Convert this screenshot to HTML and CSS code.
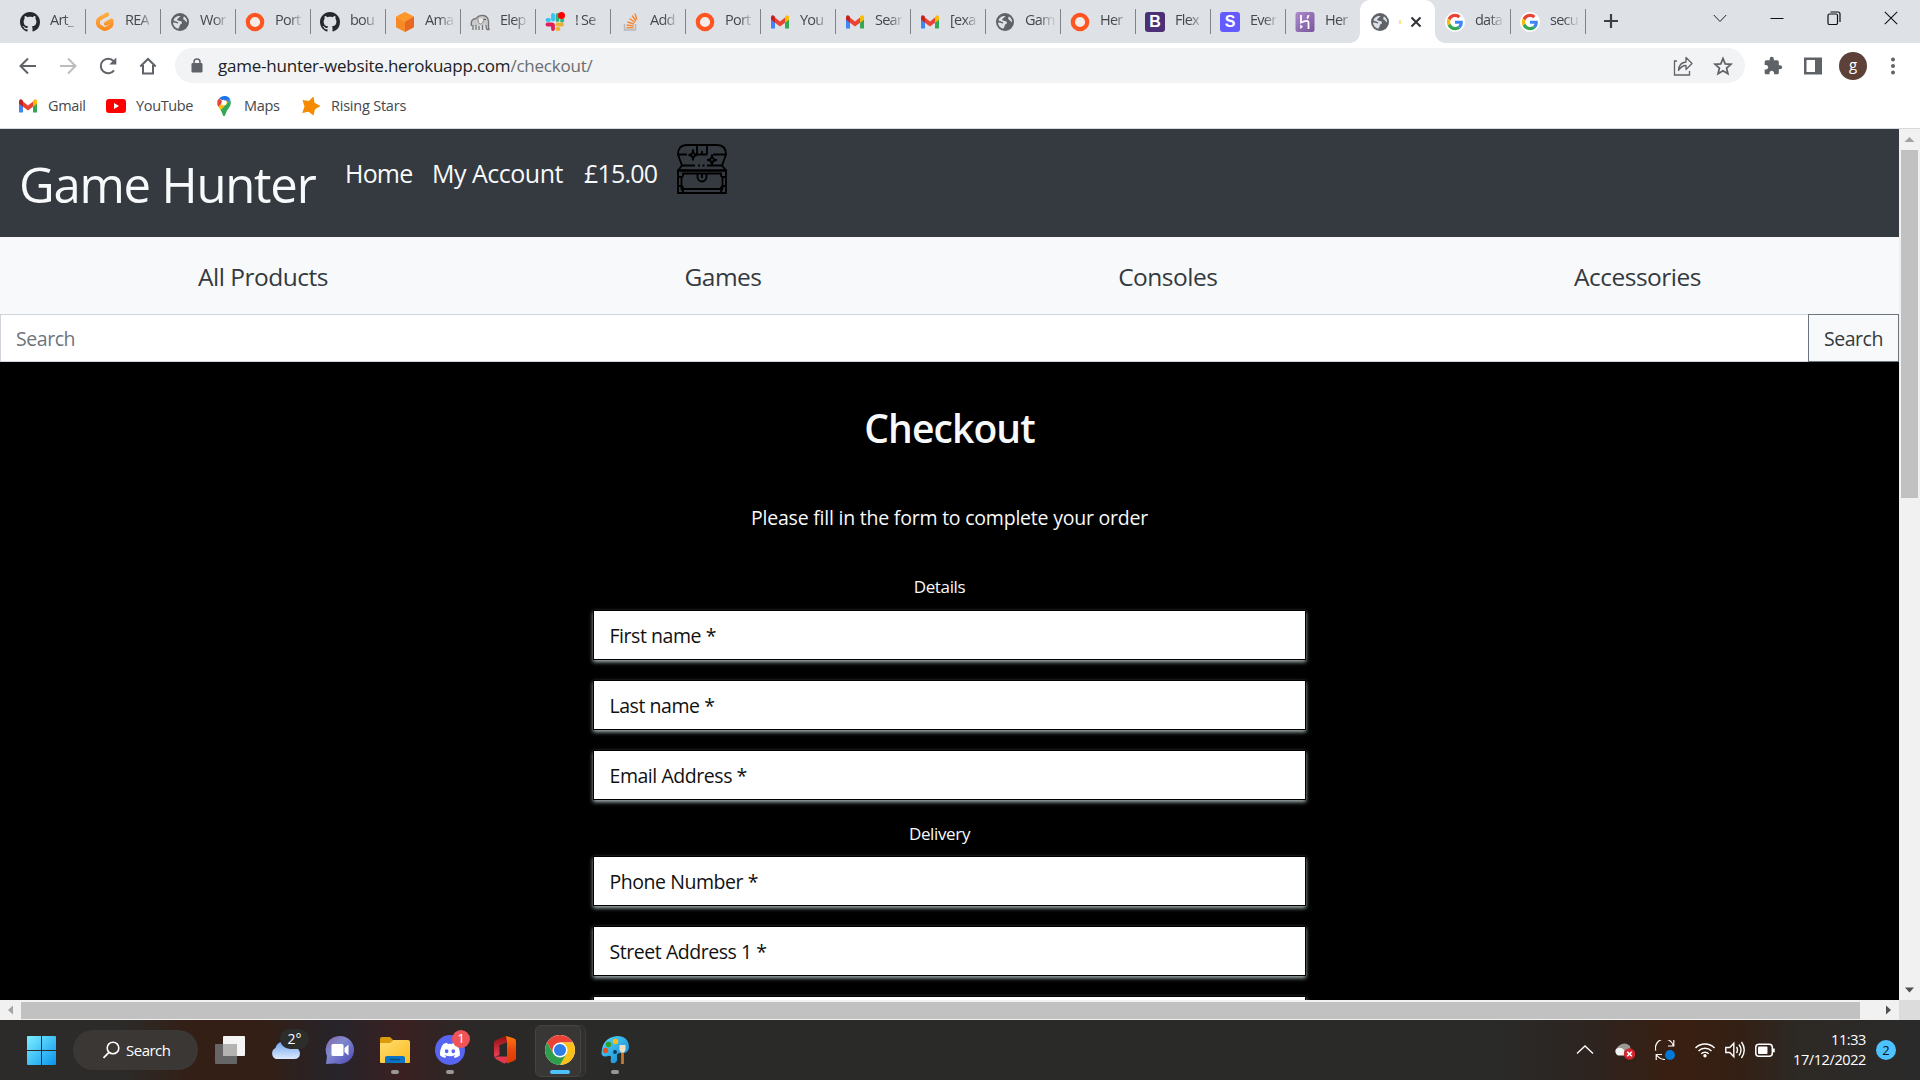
FILE: index.html
```html
<!DOCTYPE html>
<html lang="en">
<head>
<meta charset="utf-8">
<title>Game Hunter - Checkout</title>
<link rel="stylesheet" href="styles.css">
</head>
<body>
<svg class="sprite" width="0" height="0">
  <defs>
    <linearGradient id="gWin" x1="0" y1="0" x2="1" y2="1"><stop offset="0" stop-color="#7cf0ff"/><stop offset="1" stop-color="#0a93ee"/></linearGradient>
    <linearGradient id="gCloud" x1="0" y1="0" x2="0" y2="1"><stop offset="0" stop-color="#6ea3ee"/><stop offset="1" stop-color="#dbe9fd"/></linearGradient>
    <linearGradient id="gChat" x1="0" y1="0" x2="1" y2="1"><stop offset="0" stop-color="#8566a8"/><stop offset=".4" stop-color="#8189cf"/><stop offset="1" stop-color="#4b45b5"/></linearGradient>
    <linearGradient id="gFold" x1="0" y1="0" x2="1" y2="1"><stop offset="0" stop-color="#ffdc6e"/><stop offset="1" stop-color="#fbbd22"/></linearGradient>
    <linearGradient id="gOff" x1="0" y1="0" x2="0" y2="1"><stop offset="0" stop-color="#8d1010"/><stop offset="1" stop-color="#ee4058"/></linearGradient>
    <linearGradient id="gOffR" x1="0" y1="0" x2="0" y2="1"><stop offset="0" stop-color="#ff7a12"/><stop offset=".5" stop-color="#e8480d"/><stop offset="1" stop-color="#d83b01"/></linearGradient>
    <linearGradient id="gPal" x1="0" y1="0" x2="1" y2="1"><stop offset="0" stop-color="#58d6f5"/><stop offset="1" stop-color="#0c86d8"/></linearGradient>
    <linearGradient id="gHer" x1="0" y1="0" x2="1" y2="1"><stop offset="0" stop-color="#ad8bcb"/><stop offset="1" stop-color="#79559d"/></linearGradient>
    <linearGradient id="gG" x1="0" y1="0" x2="0" y2="1"><stop offset="0" stop-color="#ffae45"/><stop offset="1" stop-color="#fb8a1e"/></linearGradient>
  </defs>
  <symbol id="github" viewBox="0 0 16 16"><path fill="#24292f" d="M8 0C3.58 0 0 3.58 0 8c0 3.54 2.29 6.53 5.47 7.59.4.07.55-.17.55-.38 0-.19-.01-.82-.01-1.49-2.01.37-2.53-.49-2.69-.94-.09-.23-.48-.94-.82-1.13-.28-.15-.68-.52-.01-.53.63-.01 1.08.58 1.23.82.72 1.21 1.87.87 2.33.66.07-.52.28-.87.51-1.07-1.78-.2-3.64-.89-3.64-3.95 0-.87.31-1.59.82-2.15-.08-.2-.36-1.02.08-2.12 0 0 .67-.21 2.2.82.64-.18 1.32-.27 2-.27s1.36.09 2 .27c1.53-1.04 2.2-.82 2.2-.82.44 1.1.16 1.92.08 2.12.51.56.82 1.27.82 2.15 0 3.07-1.87 3.75-3.65 3.95.29.25.54.73.54 1.48 0 1.07-.01 1.93-.01 2.2 0 .21.15.46.55.38A8.01 8.01 0 0 0 16 8c0-4.42-3.58-8-8-8z"/></symbol>
  <symbol id="gitpod" viewBox="0 0 20 20"><path d="M12.200 2.400 4.900 6.500Q3 7.600 3 9.700v1.700q0 2.100 1.800 3.100l3.400 1.900q1.800 1 3.600 0l3-1.700q1.700-1 1.700-3V8.600l-5.600 3.100" fill="none" stroke="url(#gG)" stroke-width="4" stroke-linecap="round" stroke-linejoin="round"/></symbol>
  <symbol id="globe" viewBox="0 0 20 20"><circle cx="10" cy="10" r="9" fill="#5f6368"/><path d="M11 4c-2 .5-1.700 2.200-3 2.600-1.400.6-1 1.900.6 2.100 1.700.3 3.500.2 3.400 2 0 1.400-1.800 1.200-2.200 2.500-.2 1.200-.7 2.800-1.700 3.500C4.800 15.700 3 13 3 10.500c1.300.1 3.100.1 4.400 1 1 .3 1.200-1.100.2-1.500L3.500 8.400C4 5.500 7.200 3.400 11 4zM13.800 4.300c2.200 1.300 3.400 3.500 3.300 6-.8-.3-1.700-.9-2.100-1.800-.4-.8-1.500-.5-1.800-1.500-.2-1.100.7-1.500.6-2.700z" fill="#dee1e6"/></symbol>
  <symbol id="ring" viewBox="0 0 20 20"><circle cx="10" cy="10" r="7.200" fill="#f4ece9" stroke="#ff5621" stroke-width="4.200"/></symbol>
  <symbol id="cube" viewBox="0 0 20 20"><path d="M10 0l9 4.500L10 9.500 1 4.500z" fill="#fd9827"/><path d="M1 4.500l9 5V20l-9-4.800z" fill="#f78a26"/><path d="M19 4.500l-9 5V20l9-4.800z" fill="#e8681f"/></symbol>
  <symbol id="elephant" viewBox="0 0 20 20"><path d="M1.500 14Q0 7 6 6.500 9 3 13 3.500q5 .5 5.500 6V15q0 2 1 2.500h-2.500q-1-1-1-4.500M3 18v-5M6 18v-5M9 18v-4M12.500 18v-5" fill="#c9c9c9" stroke="#737373" stroke-width="1.300"/><path d="M8 6.500q0 5 2.500 5.500 3-.5 3-5.500" fill="#ececec" stroke="#8a8a8a"/><circle cx="15" cy="7.500" r=".8" fill="#333"/></symbol>
  <symbol id="slack" viewBox="0 0 20 20"><g stroke-width="3.800" stroke-linecap="round"><path d="M8 3v4.500" stroke="#36c5f0"/><path d="M2.500 8H4" stroke="#36c5f0"/><path d="M2.500 12.500H7" stroke="#e01e5a"/><path d="M8 13v4" stroke="#e01e5a"/><path d="M12.500 12.500H17" stroke="#ecb22e"/><path d="M12.500 17h1" stroke="#ecb22e"/><path d="M12.500 3v5" stroke="#2eb67d"/><path d="M17 8.500h.3" stroke="#2eb67d"/></g><circle cx="16.500" cy="3.500" r="3.500" fill="#f00"/></symbol>
  <symbol id="stack" viewBox="0 0 20 20"><path d="M4.500 12v6h11v-6" fill="none" stroke="#b3b8bd" stroke-width="1.500"/><path d="M6.500 15.800h7M6.600 13l6.900.9M7.500 10l6.500 2M9.500 6.500l5.500 3.800M12 3.500l4 5.500M15 1.500l1.800 6" stroke="#f48b3b" stroke-width="1.500"/></symbol>
  <symbol id="gmail" viewBox="0 0 20 20"><path d="M1 5v11.500h4V8z" fill="#4285f4"/><path d="M19 5v11.500h-4V8z" fill="#34a853"/><path d="M5 5.500l5 3.900 5-3.900v5.200l-5 3.800-5-3.800z" fill="#ea4335"/><path d="M1 5.300Q1 3 3.200 3.300L5 4.800v5.900L1 7.800z" fill="#c5221f"/><path d="M19 5.300Q19 3 16.800 3.300L15 4.800v5.900l4-2.900z" fill="#fbbc04"/></symbol>
  <symbol id="heroku" viewBox="0 0 20 20"><rect x=".5" width="19" height="20" rx="2.500" fill="url(#gHer)"/><path d="M6 3v7.500Q13.500 7 13.500 11v6M13.500 3q0 2-1.500 3.500" fill="none" stroke="#fff" stroke-width="1.800"/><path d="M5.200 12.500L8 14.800l-2.800 2.300z" fill="#fff"/></symbol>
  <symbol id="google" viewBox="0 0 20 20"><circle cx="10" cy="10" r="10" fill="#fff"/><g transform="translate(1.800 1.800) scale(.342)"><path fill="#EA4335" d="M24 9.500c3.540 0 6.710 1.220 9.210 3.600l6.850-6.850C35.900 2.380 30.470 0 24 0 14.620 0 6.510 5.380 2.560 13.220l7.980 6.190C12.430 13.720 17.740 9.500 24 9.500z"/><path fill="#4285F4" d="M46.980 24.550c0-1.570-.15-3.090-.38-4.550H24v9.020h12.940c-.58 2.960-2.260 5.480-4.780 7.180l7.730 6c4.510-4.180 7.090-10.360 7.090-17.650z"/><path fill="#FBBC05" d="M10.530 28.590c-.48-1.450-.76-2.990-.76-4.590s.27-3.140.76-4.590l-7.980-6.190C.92 16.460 0 20.120 0 24c0 3.880.92 7.540 2.560 10.780l7.970-6.190z"/><path fill="#34A853" d="M24 48c6.480 0 11.930-2.130 15.890-5.810l-7.730-6c-2.150 1.450-4.920 2.300-8.160 2.300-6.260 0-11.570-4.220-13.470-9.910l-7.980 6.190C6.510 42.620 14.620 48 24 48z"/></g></symbol>
</svg>

<div class="tabstrip">
  <div class="tab"><svg class="fav"><use href="#github"/></svg><span>Art_</span></div>
  <div class="tab"><svg class="fav"><use href="#gitpod"/></svg><span>REA</span></div>
  <div class="tab"><svg class="fav"><use href="#globe"/></svg><span>Wor</span></div>
  <div class="tab"><svg class="fav"><use href="#ring"/></svg><span>Port</span></div>
  <div class="tab"><svg class="fav"><use href="#github"/></svg><span>bou</span></div>
  <div class="tab"><svg class="fav"><use href="#cube"/></svg><span>Ama</span></div>
  <div class="tab"><svg class="fav"><use href="#elephant"/></svg><span>Elep</span></div>
  <div class="tab"><svg class="fav"><use href="#slack"/></svg><span>! Se</span></div>
  <div class="tab"><svg class="fav"><use href="#stack"/></svg><span>Add</span></div>
  <div class="tab"><svg class="fav"><use href="#ring"/></svg><span>Port</span></div>
  <div class="tab"><svg class="fav"><use href="#gmail"/></svg><span>You</span></div>
  <div class="tab"><svg class="fav"><use href="#gmail"/></svg><span>Sear</span></div>
  <div class="tab"><svg class="fav"><use href="#gmail"/></svg><span>[exa</span></div>
  <div class="tab"><svg class="fav"><use href="#globe"/></svg><span>Gam</span></div>
  <div class="tab"><svg class="fav"><use href="#ring"/></svg><span>Her</span></div>
  <div class="tab"><b class="fav letter boot">B</b><span>Flex</span></div>
  <div class="tab"><b class="fav letter stripe">S</b><span>Ever</span></div>
  <div class="tab no-sep"><svg class="fav"><use href="#heroku"/></svg><span>Her</span></div>
  <div class="tab active"><svg class="fav"><use href="#globe"/></svg><i class="hint"></i><svg class="close" viewBox="0 0 12 12"><path d="M1.500 1.500l9 9m0-9l-9 9" stroke="#303236" stroke-width="2"/></svg></div>
  <div class="tab"><svg class="fav"><use href="#google"/></svg><span>data</span></div>
  <div class="tab"><svg class="fav"><use href="#google"/></svg><span>secu</span></div>
  <svg class="plus" viewBox="0 0 16 16"><path d="M8 1v14M1 8h14" stroke="#3c4043" stroke-width="2.200"/></svg>
  <div class="winbtns">
    <svg viewBox="0 0 14 14"><path d="M.8 4L7 10.500 13.200 4" fill="none" stroke="#222"/></svg>
    <svg viewBox="0 0 14 14"><path d="M.5 7.500h13" stroke="#111"/></svg>
    <svg viewBox="0 0 14 14"><rect x="1" y="3" width="9.500" height="10.500" rx="1.500" fill="none" stroke="#111" stroke-width="1.200"/><path d="M3.500 1H11q2 0 2 2v8" fill="none" stroke="#111" stroke-width="1.200"/></svg>
    <svg viewBox="0 0 14 14"><path d="M.8 .8l12.400 12.400m0-12.400L.8 13.200" stroke="#111" stroke-width="1.100"/></svg>
  </div>
</div>

<div class="toolbar">
  <svg class="tb" viewBox="0 0 20 20"><path d="M18 10H3m7-7.500L2.500 10l7.500 7.500" fill="none" stroke="#5f6368" stroke-width="2"/></svg>
  <svg class="tb" viewBox="0 0 20 20"><path d="M2 10h15m-7-7.500l7.500 7.500-7.500 7.500" fill="none" stroke="#babcbe" stroke-width="2"/></svg>
  <svg class="tb" viewBox="0 0 20 20"><path d="M16 14.300A7.300 7.300 0 1 1 15.500 5" fill="none" stroke="#5f6368" stroke-width="2"/><path d="M18.300 1.500v7h-7z" fill="#5f6368"/></svg>
  <svg class="tb" viewBox="0 0 20 20"><path d="M2.300 10.500L10 3l7.700 7.500M5 9v8.500h10V9" fill="none" stroke="#5f6368" stroke-width="2"/></svg>
  <div class="omnibox">
    <svg class="lock" viewBox="0 0 12 15"><rect x=".5" y="5" width="11" height="9.500" rx="1.300" fill="#5f6368"/><path d="M3 6V4a3 3 0 0 1 6 0v2" fill="none" stroke="#5f6368" stroke-width="1.500"/></svg>
    <span class="url">game-hunter-website.herokuapp.com<em>/checkout/</em></span>
    <svg class="tb" viewBox="0 0 20 20"><path d="M4 5H1.500v14h15v-4" fill="none" stroke="#5f6368" stroke-width="1.300"/><path d="M5.500 14.500q.5-8 7.500-8.500V1.500l6 6-6 6V9.500q-4.500 0-7.500 5z" fill="none" stroke="#5f6368" stroke-width="1.300" stroke-linejoin="round"/></svg>
    <svg class="tb" viewBox="0 0 20 20"><path d="M10 2.500l2.200 5.300 5.700.5-4.300 3.800 1.300 5.600-4.900-3-4.900 3 1.300-5.600L2.100 8.300l5.700-.5z" fill="none" stroke="#5f6368" stroke-width="1.800"/></svg>
  </div>
  <svg class="tb ext" viewBox="0 0 24 24"><path fill="#5f6368" d="M20.500 11H19V7c0-1.100-.9-2-2-2h-4V3.500a2.500 2.500 0 0 0-5 0V5H4c-1.100 0-1.990.9-1.990 2v3.800H3.500c1.490 0 2.700 1.210 2.700 2.700s-1.210 2.700-2.700 2.700H2V20c0 1.100.9 2 2 2h3.800v-1.500c0-1.490 1.210-2.700 2.700-2.700s2.700 1.210 2.700 2.700V22H17c1.100 0 2-.9 2-2v-4h1.500a2.500 2.500 0 0 0 0-5z"/></svg>
  <svg class="tb" viewBox="0 0 20 20"><path d="M1 1.500h18v17H1zM3.500 4v12h8.500V4z" fill="#5f6368" fill-rule="evenodd"/></svg>
  <div class="cell"><span class="avatar">g</span></div>
  <svg class="tb" viewBox="0 0 20 20"><g fill="#5f6368"><circle cx="10" cy="3.500" r="2"/><circle cx="10" cy="10" r="2"/><circle cx="10" cy="16.500" r="2"/></g></svg>
</div>

<div class="bookmarks">
  <div class="bm gm"><svg><use href="#gmail"/></svg><span>Gmail</span></div>
  <div class="bm yt"><svg viewBox="0 0 20 20"><rect y="3" width="20" height="14" rx="3" fill="#f00"/><path d="M8 7l5 3-5 3z" fill="#fff"/></svg><span>YouTube</span></div>
  <div class="bm mp"><svg viewBox="0 0 20 20"><path d="M10 0a7 7 0 0 1 6.500 4.500L10 12z" fill="#4285f4"/><path d="M5 2.500Q7 0 10 0q4 0 6 3.200L8 4z" fill="#1a73e8"/><path d="M5 2.500l4 3.300L4.500 11Q1.500 6 5 2.500z" fill="#ea4335"/><path d="M4.500 10.800L12 4l2 3-7.500 7z" fill="#fbbc04"/><path d="M16.500 4.500q1 3.500-1 6.500-3 3.500-4.500 8.500-1 1-2 0-1-3.500-2.500-5.500z" fill="#34a853"/><circle cx="10" cy="6.800" r="2.600" fill="#fff"/></svg><span>Maps</span></div>
  <div class="bm rs"><svg viewBox="0 0 20 20"><path d="M12.500.5l1 6.300 6 3.200-5.500 3.300-1.500 6.200-5-3.700-6.300 1.200L3.500 10.800 1.500 4l6.300 1z" fill="#f58c00"/></svg><span>Rising Stars</span></div>
</div>

<div class="viewport">
  <main class="page">
    <header class="topnav">
      <a class="brand">Game Hunter</a>
      <a class="home">Home</a>
      <a class="acct">My Account</a>
      <a class="total">£15.00</a>
      <svg class="chest" viewBox="0 0 50 50"><g fill="none" stroke="#000" stroke-width="1.800"><path d="M1 10.500Q1 1 10 1h30q9 0 9 9.500l-4 11H30M18 21.500H5L1 10.500h9m9 0h11m6 0h13M20 1v9.500M25 7v3.500M30 1v9.500"/><path d="M21 21.500h2M25.500 21.500h2"/><path d="M5 21.500l-4 5h48l-4-5"/><path d="M1 26.500h48V49H1zM6 29.500h38v2.500l1.500 1.500v8L44 43.500V45H6v-1.500l-1.500-2v-8L6 32zM1 33l3.500 0M49 33h-3.500M1 42h3.500v3l2.500 4M49 42h-3.500v3L43 49"/><path d="M20.500 29.500V33a4.500 4.500 0 0 0 9 0v-3.500M25 30v4"/><path d="M16 5.500q0 5.500-4.500 5.500 4.500 0 4.500 5.500 0-5.500 4.500-5.500-4.500 0-4.500-5.500zM35 10.500q0 5.500-5 5.500 5 0 5 5.500 0-5.500 5-5.500-5 0-5-5.500z" fill="#343a40"/></g></svg>
    </header>
    <nav class="catnav"><a>All Products</a><a>Games</a><a>Consoles</a><a>Accessories</a></nav>
    <form class="search"><div class="sfield"><span>Search</span></div><div class="sbtn"><span>Search</span></div></form>
    <section class="checkout">
      <h2>Checkout</h2>
      <p>Please fill in the form to complete your order</p>
      <div class="fields">
        <div class="legend first">Details</div>
        <div class="input">First name *</div>
        <div class="input">Last name *</div>
        <div class="input">Email Address *</div>
        <div class="legend">Delivery</div>
        <div class="input">Phone Number *</div>
        <div class="input">Street Address 1 *</div>
        <div class="input"></div>
      </div>
    </section>
  </main>
  <div class="vbar"><svg viewBox="0 0 21 21"><path d="M5.500 13l5-5 5 5z" fill="#a3a3a3"/></svg><div class="vthumb"></div><svg viewBox="0 0 21 21"><path d="M6 8.500h9l-4.500 5z" fill="#505050"/></svg></div>
  <div class="hbar"><svg viewBox="0 0 21 20"><path d="M13 5.500v9L8 10z" fill="#a3a3a3"/></svg><div class="hthumb"></div><svg viewBox="0 0 21 20"><path d="M8 5.500v9l5-4.500z" fill="#505050"/></svg></div>
  <div class="corner"></div>
</div>

<footer class="taskbar">
  <svg class="win" viewBox="0 0 29 29"><path d="M0 1q0-1 1-1h13v14H0zM15 0h13q1 0 1 1v13H15zM0 15h14v14H1q-1 0-1-1zM15 15h14v13q0 1-1 1H15z" fill="url(#gWin)"/></svg>
  <div class="tsearch"><svg viewBox="0 0 18 18"><circle cx="11" cy="7" r="5.800" fill="none" stroke="#fff" stroke-width="1.600"/><path d="M7 11.300L1.500 16.800" stroke="#fff" stroke-width="1.800"/></svg><span>Search</span></div>
  <div class="app"><svg viewBox="0 0 30 30"><rect x="8" y="1" width="22" height="20" rx="1" fill="#f4f4f4"/><rect x="0" y="9" width="22" height="20" rx="1" fill="#666"/><rect x="8" y="9" width="14" height="12" fill="#b5b3b2"/></svg></div>
  <div class="app"><svg viewBox="0 0 30 30"><path d="M6 24a6 6 0 0 1-.5-11Q7 7 13 6.500q6 0 8 6 8-1 9 5.500 0 6-6 6z" fill="url(#gCloud)"/></svg><span class="temp">2°</span></div>
  <div class="app"><svg viewBox="0 0 30 30"><path d="M15 1a14 14 0 1 1-4 27.400L1 29l1-8A14 14 0 0 1 15 1z" fill="url(#gChat)"/><rect x="6.500" y="9" width="12" height="12" rx="1.500" fill="#fff"/><path d="M19.500 13l4-3.500v11l-4-3.500z" fill="#fff"/></svg></div>
  <div class="app"><svg viewBox="0 0 30 30"><path d="M0 4q0-2 2-2h8l3 3-3 4H0z" fill="#dc9a0d"/><path d="M0 8h10l3-3h15q2 0 2 2v20q0 1-1 1H1q-1 0-1-1z" fill="url(#gFold)"/><path d="M5 28v-5q0-2 2-2h16q2 0 2 2v5z" fill="#0a74c4"/><path d="M10 24.500h10" stroke="#064b86" stroke-width="1.400"/></svg><i class="dot"></i></div>
  <div class="app"><svg viewBox="0 0 30 30"><circle cx="15" cy="15" r="15" fill="#5865f2"/><path transform="translate(5 5.500) scale(.83)" fill="#fff" d="M20.317 4.370a19.791 19.791 0 0 0-4.885-1.515.074.074 0 0 0-.079.037c-.21.375-.444.864-.608 1.250a18.270 18.270 0 0 0-5.487 0 12.640 12.640 0 0 0-.617-1.250.077.077 0 0 0-.079-.037A19.736 19.736 0 0 0 3.677 4.370a.07.07 0 0 0-.032.027C.533 9.046-.32 13.580.099 18.057a.082.082 0 0 0 .031.057 19.900 19.900 0 0 0 5.993 3.030.078.078 0 0 0 .084-.028c.462-.63.874-1.295 1.226-1.994a.076.076 0 0 0-.041-.106 13.107 13.107 0 0 1-1.872-.892.077.077 0 0 1-.008-.128c.126-.094.252-.192.372-.291a.074.074 0 0 1 .077-.010c3.928 1.793 8.180 1.793 12.062 0a.074.074 0 0 1 .078.009c.12.099.246.198.373.292a.077.077 0 0 1-.006.127 12.299 12.299 0 0 1-1.873.892.077.077 0 0 0-.041.107c.36.698.772 1.362 1.225 1.993a.076.076 0 0 0 .084.028 19.839 19.839 0 0 0 6.002-3.030.077.077 0 0 0 .032-.054c.5-5.177-.838-9.674-3.549-13.660a.061.061 0 0 0-.031-.030zM8.020 15.330c-1.183 0-2.157-1.085-2.157-2.419 0-1.333.956-2.419 2.157-2.419 1.210 0 2.176 1.096 2.157 2.420 0 1.333-.956 2.418-2.157 2.418zm7.975 0c-1.183 0-2.157-1.085-2.157-2.419 0-1.333.955-2.419 2.157-2.419 1.210 0 2.176 1.096 2.157 2.420 0 1.333-.946 2.418-2.157 2.418z"/></svg><span class="badge">1</span><i class="dot"></i></div>
  <div class="app"><svg viewBox="0 0 30 30"><path d="M15 1L6 5q-2 1-2 3v14l5.500-2V10l8.500-3V2z" fill="url(#gOff)"/><path d="M16 1l7.500 2.300q2.500.7 2.500 3v17q0 2-2.500 2.800L17 28.500V6.500z" fill="url(#gOffR)"/><path d="M9 21.500h8V27q-1.500 2-3.500 1.200L7 24.800q-2-1.300-2.500-3z" fill="#e2374c"/></svg></div>
  <div class="app current"><svg viewBox="0 0 48 48"><circle cx="24" cy="24" r="24" fill="#fff"/><path d="M24 12h20.780A24 24 0 0 0 3.220 12L13.600 30z" fill="#ea4335"/><path d="M34.390 30L24 48A24 24 0 0 0 44.780 12H24z" fill="#fbc116"/><path d="M13.610 30L3.220 12A24 24 0 0 0 24 48l10.390-18z" fill="#2f9e4c"/><circle cx="24" cy="24" r="12" fill="#fff"/><circle cx="24" cy="24" r="9.700" fill="#2f7de9"/></svg><i class="dot wide"></i></div>
  <div class="app"><svg viewBox="0 0 30 30"><path d="M17 1q12 0 12 12-1 6-8 5-5 0-4 4 1 7-5 6-2-.5-1-5 .500-3-3-2-6 2-6.500-3Q2 3 17 1z" fill="url(#gPal)"/><circle cx="15.500" cy="6.500" r="2.700" fill="#f8bd1b"/><circle cx="8.500" cy="9.500" r="2.700" fill="#2ea12d"/><circle cx="5.500" cy="15.500" r="2.700" fill="#e25320"/><circle cx="15" cy="17" r="2" fill="#153d62"/><path d="M22.500 16v13" stroke="#c27a2c" stroke-width="2.800"/><path d="M19.500 10h6v5l-1.500 2.500h-3L19.500 15z" fill="#f0dfc7"/></svg><i class="dot"></i></div>
  <div class="tray">
    <svg viewBox="0 0 20 20"><path d="M2 13.500L10 6l8 7.500" fill="none" stroke="#fff" stroke-width="1.300"/></svg>
    <svg class="wide-gap" viewBox="0 0 20 20"><path d="M5 15a5 5 0 0 1-2-8.500Q9 1 15 6l1 9z" fill="#9c9995"/><path d="M3 15.500Q-1 13 1 9q5-3 8 1v5.500z" fill="#f3f3f3"/><circle cx="14.500" cy="14" r="5.700" fill="#d62531"/><path d="M12.200 11.700l4.600 4.600m0-4.600l-4.600 4.600" stroke="#fff" stroke-width="1.600"/></svg>
    <svg class="wide-gap" viewBox="0 0 20 20"><path d="M.8 10.500A8.700 8.700 0 0 1 18.200 5.500M18.800 0v6H13M1.200 20v-5.500H7M1.500 15Q5 19.500 10 19.500" fill="none" stroke="#fff" stroke-width="1.200"/><circle cx="15" cy="15" r="5" fill="#0078d7"/></svg>
    <svg class="wide-gap" viewBox="0 0 20 20"><g fill="none" stroke="#fff" stroke-width="1.500"><path d="M.5 8a13.500 13.500 0 0 1 19 0"/><path d="M3.500 11a9.200 9.200 0 0 1 13 0"/><path d="M6.300 13.800a5.200 5.200 0 0 1 7.400 0"/></g><circle cx="10" cy="15.700" r="1.700" fill="#fff"/></svg>
    <svg class="gap" viewBox="0 0 20 20"><g fill="none" stroke="#fff" stroke-width="1.400"><path d="M.8 7.500h4l4-4.200v13.400l-4-4.200h-4z"/><path d="M11.500 7q2 3 0 6M14 4.500q4 5.500 0 11M16.500 2q5.500 8 0 16"/></g></svg>
    <svg class="gap" viewBox="0 0 20 20"><rect x=".8" y="4.300" width="16.500" height="12" rx="3" fill="none" stroke="#fff" stroke-width="1.500"/><rect x="3" y="6.500" width="9.500" height="7.600" rx="1" fill="#fff"/><path d="M18.500 8.500v3.800" stroke="#fff" stroke-width="2.500"/></svg>
    <div class="clock"><span>11:33</span><span>17/12/2022</span></div>
    <span class="notif">2</span>
  </div>
</footer>
</body>
</html>
```
FILE: styles.css
```css
* { box-sizing: border-box; }
html, body { margin: 0; width: 1920px; height: 1080px; overflow: hidden; }
body { font-family: "Open Sans", "Noto Sans", sans-serif; display: flex; flex-direction: column; background: #fff; }
svg { display: block; flex: none; }
.sprite { position: absolute; }
em, i { font-style: normal; }

/* Tab strip */
.tabstrip { height: 43px; background: #dee1e6; display: flex; padding-left: 10px; flex: none; }
.tab { width: 75px; height: 43px; padding: 0 0 0 10px; display: flex; align-items: center; gap: 10px; position: relative; flex: none; }
.tab::after { content: ""; position: absolute; right: -1px; top: 9px; width: 1px; height: 25px; background: #808388; }
.tab.no-sep::after, .tab.active::after { display: none; }
.fav { width: 20px; height: 20px; flex: none; }
.letter { border-radius: 3px; color: #fff; font: 700 16px/20px "Liberation Sans", Arial, sans-serif; text-align: center; }
.boot { background: #4c2f74; }
.stripe { background: #635bff; }
.tab span { font-size: 14.5px; letter-spacing: -.75px; line-height: 40px; height: 43px; color: #45484c; white-space: nowrap; -webkit-mask-image: linear-gradient(90deg, #000 14px, rgba(0, 0, 0, .2) 26px); mask-image: linear-gradient(90deg, #000 14px, rgba(0, 0, 0, .2) 26px); }
.tab.active { background: #fff; border-radius: 10px 10px 0 0; gap: 0; }
.tab.active::before { content: ""; position: absolute; left: -10px; right: -10px; bottom: 0; height: 10px; background: radial-gradient(circle at 0 0, transparent 9.500px, #fff 10px) 0 0 / 10px 10px no-repeat, radial-gradient(circle at 100% 0, transparent 9.500px, #fff 10px) 100% 0 / 10px 10px no-repeat; }
.hint { width: 2px; height: 4px; background: #fde08e; margin: 0 9px 0 9px; }
.close { width: 12px; height: 12px; }
.plus { width: 16px; height: 16px; margin: 13px 0 0 18px; }
.winbtns { margin: 11px 22px 0 auto; display: flex; gap: 43px; }
.winbtns svg { width: 14px; height: 14px; }

/* Toolbar */
.toolbar { height: 45px; flex: none; padding: 0 7px 0 8px; display: flex; align-items: center; }
.tb { width: 40px; height: 20px; }
.tb.ext { margin-left: 8px; }
.omnibox { width: 1570px; height: 35px; margin-left: 7px; border-radius: 18px; background: #f1f3f4; display: flex; align-items: center; padding: 0 2px 0 16px; }
.lock { width: 12px; height: 15px; }
.url { flex: 1; margin-left: 15px; font-size: 17px; letter-spacing: -.22px; line-height: 33px; color: #202124; }
.url em { color: #6a6d71; }
.cell { width: 40px; display: flex; justify-content: center; }
.avatar { width: 28px; height: 28px; border-radius: 50%; background: #5d4037; color: #fff; font-size: 15px; line-height: 25px; text-align: center; }

.bookmarks { height: 41px; flex: none; border-bottom: 1px solid #d8d9dc; display: flex; padding-left: 18px; }
.bm { display: flex; align-items: center; height: 36px; font-size: 14.500px; letter-spacing: -.35px; color: #45484c; }
.bm svg { width: 20px; height: 20px; }
.bm span { white-space: nowrap; margin-left: 10px; padding-bottom: 2px; }
.gm { width: 88px; }
.yt { width: 108px; }
.mp { width: 87px; }
.rs { letter-spacing: -.22px; }

/* Scrolling viewport */
.viewport { height: 891px; flex: none; display: grid; grid-template: 871px 20px / 1899px 21px; }
.page { background: #000; overflow: hidden; }
.vbar { background: #f1f1f1; display: flex; flex-direction: column; }
.vbar svg { width: 21px; height: 21px; }
.vthumb { width: 17px; height: 348px; margin: 0 auto auto 2px; background: #c1c1c1; }
.hbar { background: #f1f1f1; display: flex; align-items: center; }
.hbar svg { width: 21px; height: 20px; }
.hthumb { width: 1839px; height: 17px; margin-right: auto; background: #c1c1c1; }
.corner { background: #dcdcdc; }

.topnav { height: 108px; background: #343a40; display: flex; align-items: flex-start; padding-left: 19px; color: #f8f9fa; }
.topnav a { font-size: 25px; line-height: 89px; white-space: nowrap; letter-spacing: -.5px; }
.topnav .brand { font-size: 49px; line-height: 111px; width: 326px; letter-spacing: -1.2px; }
.topnav .home { width: 87px; letter-spacing: -.8px; }
.topnav .acct { width: 152px; }
.topnav .total { width: 93px; letter-spacing: -.8px; }
.chest { width: 50px; height: 50px; margin-top: 15px; }

.catnav { height: 77px; background: #f8f9fa; display: flex; justify-content: space-between; padding: 0 198px; color: #343a40; font-size: 24.500px; line-height: 79px; letter-spacing: -.5px; }
.search { display: flex; height: 48px; margin: 0; font-size: 19.500px; line-height: 48px; letter-spacing: -.45px; }
.sfield { flex: 1; background: #fff; border: 1px solid #ced4da; border-right: 0; padding-left: 15px; color: #6c757d; }
.sbtn { width: 91px; border: 1px solid #6c757d; background: #f8f9fa; color: #343a40; text-align: center; }

.checkout { text-align: center; color: #f8f9fa; }
.checkout h2 { margin: 0; font-size: 39px; font-weight: 600; line-height: 132px; height: 131px; letter-spacing: -.9px; }
.checkout p { margin: 0; font-size: 19.500px; line-height: 50px; height: 48px; letter-spacing: -.22px; }
.fields { width: 713px; margin: 0 auto; }
.legend { padding: 16px 20px 0 0; height: 56px; line-height: 35px; font-size: 17px; letter-spacing: -.35px; margin-top: -20px; }
.legend.first { height: 69px; padding-top: 28px; margin-top: 0; }
.input { height: 50px; margin-bottom: 20px; background: #fff; border: 1px solid #000; box-shadow: 0 2px 4px #aab7b8; color: #111; font-size: 19.500px; line-height: 49px; letter-spacing: -.45px; text-align: left; padding-left: 15.500px; }

/* Taskbar */
.taskbar { height: 60px; flex: none; display: flex; align-items: center; padding-left: 27px; color: #fff; background: linear-gradient(90deg, #2c2b29 0, #2c2b29 120px, #331f16 190px, #331f16 265px, #26242a 335px, #3a2021 400px, #2b2827 470px, #2a2a29 560px, #2a2a29 1500px, #2d2420 1590px, #391f11 1675px, #332014 1740px, #2d2925 1800px, #2a2a2a 100%); }
.win { width: 29px; height: 29px; margin-right: 17px; }
.tsearch { width: 125px; height: 40px; border-radius: 20px; background: #3b3734; display: flex; align-items: center; padding-left: 29px; margin-right: 4px; font-size: 15px; line-height: 38px; letter-spacing: -.5px; }
.tsearch svg { width: 18px; height: 18px; margin-right: 6px; }
.app { width: 55px; height: 60px; position: relative; display: flex; align-items: center; justify-content: center; }
.app > svg { width: 30px; height: 30px; z-index: 1; }
.temp { position: absolute; z-index: 2; left: 23px; top: 9px; width: 29px; height: 20px; border-radius: 10px; background: #2c2e2c; font-size: 14px; line-height: 19px; text-align: center; }
.badge { position: absolute; z-index: 2; left: 30px; top: 10px; width: 18px; height: 18px; border-radius: 50%; background: #f05456; font-size: 13.500px; line-height: 17px; text-align: center; }
.dot { position: absolute; bottom: 6px; left: 24px; width: 8px; height: 4px; border-radius: 2px; background: #9a9796; }
.dot.wide { left: 18px; width: 20px; background: #4cc2ff; z-index: 1; }
.current::before, .current::after { content: ""; position: absolute; left: 3px; top: 5px; width: 44px; height: 50px; border-radius: 6px; background: #383735; border: 1px solid #454442; }
.current::before { left: 8px; background: #31302f; border-color: #3c3b39; }
.tray { margin-left: auto; margin-right: 24px; display: flex; align-items: center; }
.tray svg { width: 20px; height: 20px; }
.tray .wide-gap { margin-left: 20px; }
.tray .gap { margin-left: 10px; }
.clock { width: 91px; display: flex; flex-direction: column; align-items: flex-end; font-size: 14.500px; line-height: 20px; letter-spacing: -.4px; white-space: nowrap; }
.notif { margin-left: 10px; width: 20px; height: 20px; border-radius: 50%; background: #4cc2ff; color: #111; font-size: 13px; line-height: 20px; text-align: center; }
```
